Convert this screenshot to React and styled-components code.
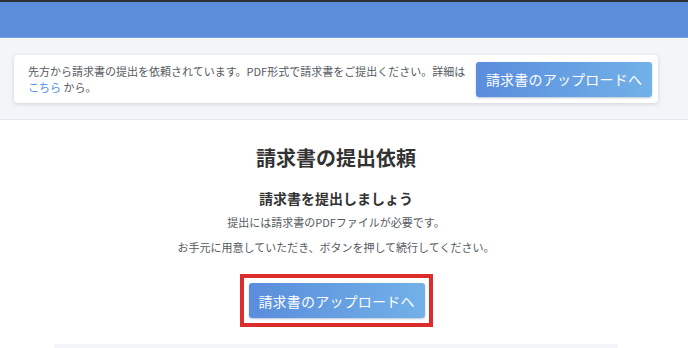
import React from "react";
import styled, { createGlobalStyle } from "styled-components";

const Global = createGlobalStyle`
  html, body { margin: 0; padding: 0; background: #ffffff; }
  body { font-family: "Noto Sans CJK JP", "Noto Sans", sans-serif; color: #333; }
  * { box-sizing: border-box; }
`;

const Page = styled.div`
  width: 688px;
  height: 348px;
  overflow: hidden;
  display: flex;
  flex-direction: column;
`;

const Header = styled.header`
  height: 38px;
  flex: none;
  background: #5c8edb;
  border-top: 2px solid #2b2f36;
  border-bottom: 1px solid #7aa3e3;
`;

const NoticeArea = styled.section`
  flex: none;
  background: #f4f5f9;
  padding: 17px 30px 16px 14px;
  border-bottom: 1px solid #e3e5ea;
`;

const NoticeCard = styled.div`
  display: flex;
  align-items: center;
  justify-content: space-between;
  gap: 6px;
  height: 48px;
  padding: 0 6px 0 14px;
  background: #ffffff;
  border-radius: 4px;
  box-shadow: 0 1px 4px rgba(40, 50, 70, 0.18);
`;

const NoticeText = styled.p`
  margin: 0;
  font-size: 11px;
  line-height: 16px;
  color: #555a60;
  white-space: nowrap;
`;

const Link = styled.a`
  color: #4a90e2;
  text-decoration: none;
`;

const Button = styled.button`
  width: 176px;
  height: 35px;
  flex: none;
  border: none;
  border-radius: 3px;
  background: linear-gradient(90deg, #5a8ddc 0%, #72b1e8 100%);
  box-shadow: 0 1px 2px rgba(30, 60, 120, 0.3);
  color: #ffffff;
  font-family: "Noto Sans CJK JP", "Noto Sans", sans-serif;
  font-size: 14px;
  letter-spacing: 0.2px;
  cursor: pointer;
  padding: 0;
`;

const Main = styled.main`
  flex: 1;
  display: flex;
  flex-direction: column;
  align-items: center;
  padding: 24px 16px 0 0;
`;

const Title = styled.h1`
  margin: 0;
  font-size: 20px;
  line-height: 28px;
  font-weight: 700;
  color: #333;
`;

const Subtitle = styled.h2`
  margin: 16px 0 0;
  font-size: 14px;
  line-height: 20px;
  font-weight: 700;
  color: #333;
`;

const Body = styled.p`
  margin: ${(p) => p.$gap}px 0 0;
  font-size: 11px;
  line-height: 16px;
  color: #555a60;
`;

const Highlight = styled.div`
  margin-top: 19px;
  padding: 5px 4px 5px 5px;
  border: 4px solid #dd2c2c;
`;

const Footer = styled.div`
  margin-top: 17px;
  width: 564px;
  height: 12px;
  background: #f4f5f9;
  flex: none;
`;

export default function App() {
  return (
    <Page>
      <Global />
      <Header />
      <NoticeArea>
        <NoticeCard>
          <NoticeText>
            先方から請求書の提出を依頼されています。PDF形式で請求書をご提出ください。詳細は
            <br />
            <Link href="#">こちら</Link> から。
          </NoticeText>
          <Button>請求書のアップロードへ</Button>
        </NoticeCard>
      </NoticeArea>
      <Main>
        <Title>請求書の提出依頼</Title>
        <Subtitle>請求書を提出しましょう</Subtitle>
        <Body $gap={6}>提出には請求書のPDFファイルが必要です。</Body>
        <Body $gap={9}>お手元に用意していただき、ボタンを押して続行してください。</Body>
        <Highlight>
          <Button>請求書のアップロードへ</Button>
        </Highlight>
        <Footer />
      </Main>
    </Page>
  );
}
